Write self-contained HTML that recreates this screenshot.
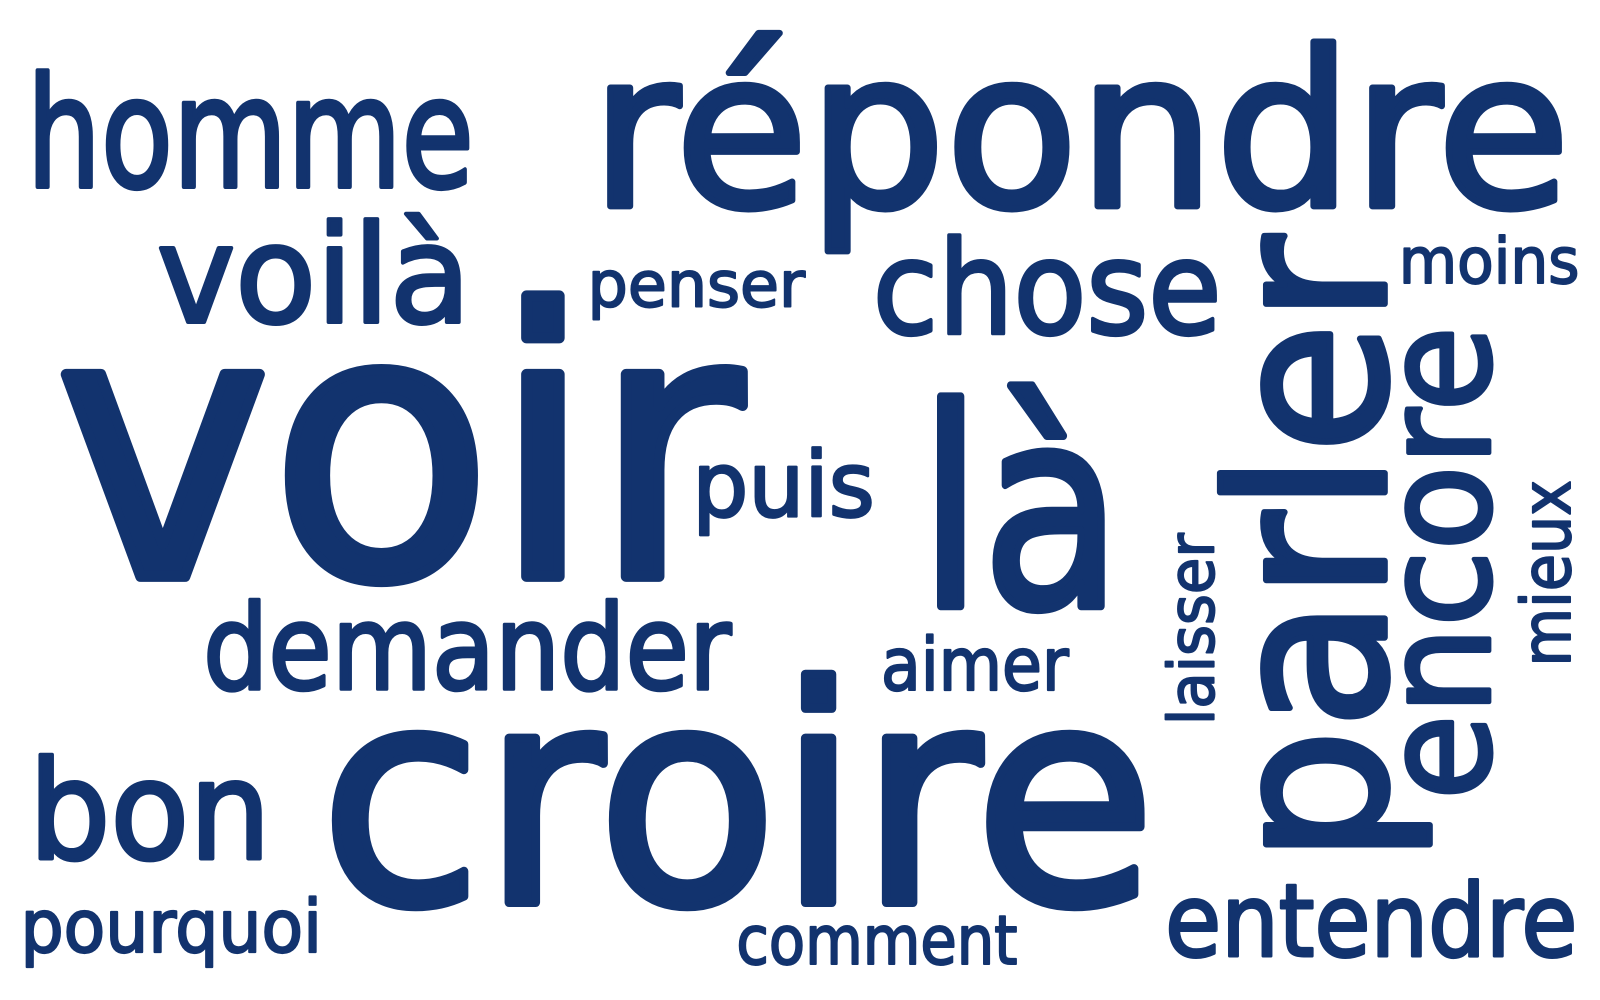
<!DOCTYPE html>
<html><head><meta charset="utf-8"><style>
html,body{margin:0;padding:0;background:#fff;width:1600px;height:1000px;overflow:hidden}
svg text{font-family:"DejaVu Sans","Liberation Sans",sans-serif;font-weight:normal;fill:#12336e;stroke:#12336e;stroke-width:0.03em;stroke-linejoin:round}
</style></head><body>
<svg width="1600" height="1000" viewBox="0 0 1600 1000" xmlns="http://www.w3.org/2000/svg">
<g transform="scale(1.0256)">
<text x="26" y="182" font-size="149" textLength="436" lengthAdjust="spacingAndGlyphs">homme</text>
<text x="576" y="201" font-size="211" textLength="955" lengthAdjust="spacingAndGlyphs">répondre</text>
<text x="153" y="314" font-size="132" textLength="306" lengthAdjust="spacingAndGlyphs">voilà</text>
<text x="573" y="299" font-size="62" textLength="212" lengthAdjust="spacingAndGlyphs">penser</text>
<text x="851" y="325" font-size="126" textLength="340" lengthAdjust="spacingAndGlyphs">chose</text>
<text x="1364" y="276" font-size="62" textLength="176" lengthAdjust="spacingAndGlyphs">moins</text>
<text x="54" y="562" font-size="360" textLength="670" lengthAdjust="spacingAndGlyphs">voir</text>
<text x="675" y="503" font-size="88" textLength="178" lengthAdjust="spacingAndGlyphs">puis</text>
<text x="896" y="591" font-size="269" textLength="198" lengthAdjust="spacingAndGlyphs">là</text>
<text x="198" y="672" font-size="115" textLength="515" lengthAdjust="spacingAndGlyphs">demander</text>
<text x="859" y="673" font-size="71" textLength="183" lengthAdjust="spacingAndGlyphs">aimer</text>
<text x="28" y="837" font-size="133" textLength="236" lengthAdjust="spacingAndGlyphs">bon</text>
<text x="312" y="880" font-size="293" textLength="815" lengthAdjust="spacingAndGlyphs">croire</text>
<text x="20" y="928" font-size="71" textLength="294" lengthAdjust="spacingAndGlyphs">pourquoi</text>
<text x="718" y="940" font-size="66" textLength="274" lengthAdjust="spacingAndGlyphs">comment</text>
<text x="1136" y="932" font-size="98" textLength="402" lengthAdjust="spacingAndGlyphs">entendre</text>
<text transform="translate(1350,842) rotate(-90)" font-size="211" textLength="612" lengthAdjust="spacingAndGlyphs">parler</text>
<text transform="translate(1452,780) rotate(-90)" font-size="144" textLength="462" lengthAdjust="spacingAndGlyphs">encore</text>
<text transform="translate(1183,707) rotate(-90)" font-size="62" textLength="187" lengthAdjust="spacingAndGlyphs">laisser</text>
<text transform="translate(1531,650) rotate(-90)" font-size="66" textLength="182" lengthAdjust="spacingAndGlyphs">mieux</text>
</g>
</svg>
</body></html>
